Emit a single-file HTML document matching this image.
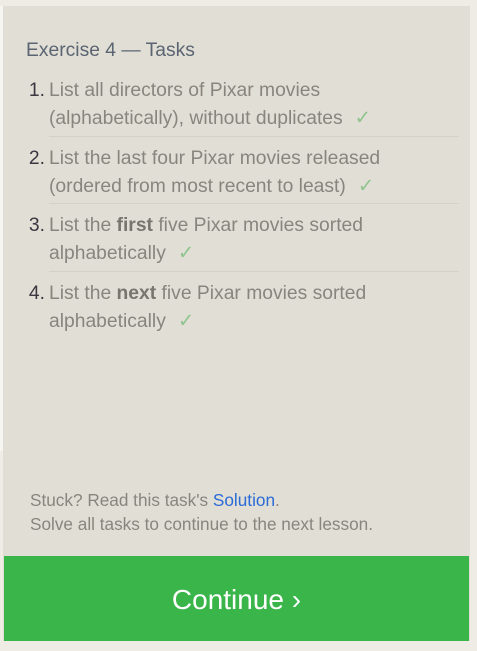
<!DOCTYPE html>
<html><head><style>
body{margin:0;width:477px;height:651px;background:#efece6;font-family:"Liberation Sans",sans-serif;position:relative;overflow:hidden}
.strip{position:absolute;left:0;top:6px;width:3px;height:445px;background:#f6f5f1}
.panel{position:absolute;left:3px;top:6px;width:467px;height:635px;background:#e1dfd5}
h1{position:absolute;left:23px;top:34px;margin:0;font-weight:normal;font-size:19.3px;color:#5b6472}
.item{position:absolute;left:0;width:460px;font-size:19.3px;line-height:28px;color:#8a847e}
.num{position:absolute;left:0;width:42px;text-align:right;color:#3d3540}
.txt{position:absolute;left:46px;white-space:nowrap}
.sep{position:absolute;left:46px;width:410px;height:1px;background:#d4d1c7}
.ck{color:#8fc48f;margin-left:12px}
b{color:#7a746e}
.foot{position:absolute;left:27px;font-size:17.2px;color:#8a847e}
.btn{position:absolute;left:1px;top:550px;width:465px;height:85px;background:#3ab54a;color:#fff;font-size:28px;text-align:center;line-height:87px}
</style></head><body>
<div class="strip"></div>
<div class="panel">
<h1>Exercise 4 — Tasks</h1>
<div class="item" style="top:71px"><span class="num">1.</span><div class="txt">List all directors of Pixar movies<br>(alphabetically), without duplicates<span class="ck">✓</span></div></div>
<div class="sep" style="top:130px"></div>
<div class="item" style="top:139px"><span class="num">2.</span><div class="txt">List the last four Pixar movies released<br>(ordered from most recent to least)<span class="ck">✓</span></div></div>
<div class="sep" style="top:197px"></div>
<div class="item" style="top:206px"><span class="num">3.</span><div class="txt">List the <b>first</b> five Pixar movies sorted<br>alphabetically<span class="ck">✓</span></div></div>
<div class="sep" style="top:265px"></div>
<div class="item" style="top:274px"><span class="num">4.</span><div class="txt">List the <b>next</b> five Pixar movies sorted<br>alphabetically<span class="ck">✓</span></div></div>
<div class="foot" style="top:484px">Stuck? Read this task's <span style="color:#2a6bd8">Solution</span>.</div>
<div class="foot" style="top:508px">Solve all tasks to continue to the next lesson.</div>
<div class="btn">Continue ›</div>
</div>
</body></html>
